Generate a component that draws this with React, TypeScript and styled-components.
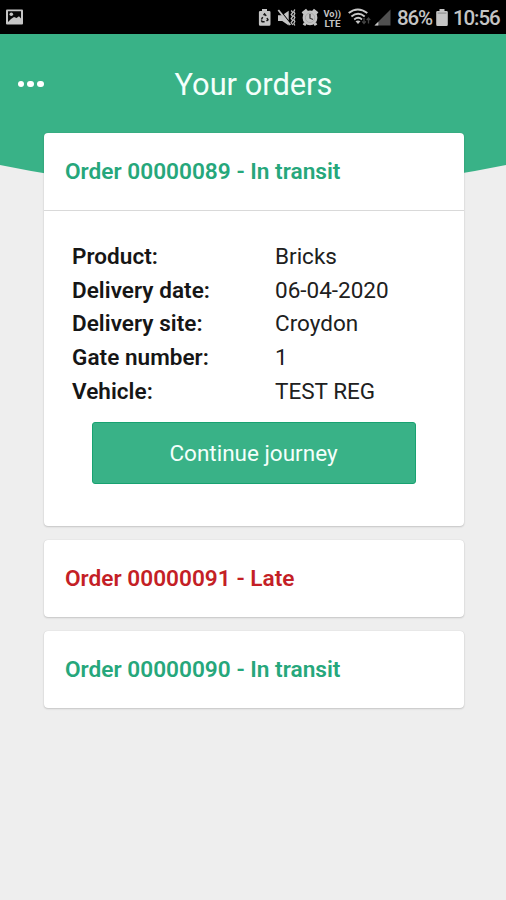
import React from "react";
import styled, { createGlobalStyle } from "styled-components";

const GlobalStyle = createGlobalStyle`
  * { box-sizing: border-box; }
  body {
    margin: 0;
    background: #eeeeee;
    font-family: Roboto, "Liberation Sans", sans-serif;
    font-size: 22.5px;
  }
`;

const Screen = styled.div`
  position: relative;
  height: 900px;
  overflow: hidden;
  background: #eeeeee;
`;

const StatusBar = styled.div`
  display: flex;
  justify-content: space-between;
  height: 34px;
  background: #000;
`;

const StatusArt = styled.svg`
  display: block;
  flex: none;
`;

const StatusRight = styled.div`
  display: flex;
`;

const StatusText = styled.span<{ $width: number }>`
  width: ${(p) => p.$width}px;
  color: #c4c4c4;
  font-size: 20.5px;
  font-weight: 500;
  letter-spacing: -1.1px;
  line-height: 37px;
  white-space: nowrap;
`;

const Curve = styled.svg`
  position: absolute;
  top: 34px;
  left: 0;
`;

const Header = styled.header`
  position: relative;
  display: grid;
  grid-template-columns: 60px 1fr 60px;
  align-items: center;
  height: 99px;
`;

const MenuButton = styled.button`
  display: flex;
  gap: 3.8px;
  padding: 1px 0 0 17.5px;
  border: 0;
  background: none;
`;

const Dot = styled.span`
  width: 6.2px;
  height: 6.2px;
  border-radius: 50%;
  background: #fff;
`;

const Title = styled.h1`
  margin: 2px 0 0 1px;
  color: #f4fffb;
  font-size: 30.8px;
  font-weight: 400;
  text-align: center;
`;

const Orders = styled.main`
  position: relative;
  display: flex;
  flex-direction: column;
  gap: 14px;
  padding: 0 42.5px 0 43.5px;
`;

const Card = styled.section`
  border-radius: 4px;
  background: #fff;
  box-shadow: 0 1px 2px rgba(0, 0, 0, 0.16), 0 0 1px rgba(0, 0, 0, 0.16);
`;

const CardTitle = styled.h2<{ $late?: boolean }>`
  height: 77px;
  margin: 0;
  padding: 0 21.5px;
  color: ${(p) => (p.$late ? "#c41f26" : "#26a77b")};
  font-size: 22.65px;
  font-weight: 600;
  line-height: 78px;
`;

const CardBody = styled.div`
  height: 316px;
  padding: 28.8px 28.5px 0;
  border-top: 1px solid #d9d9d9;
`;

const Details = styled.dl`
  display: grid;
  grid-template-columns: 203px 1fr;
  margin: 0;
  line-height: 33.75px;
`;

const Label = styled.dt`
  color: #161616;
  font-weight: 600;
  letter-spacing: 0.05px;
`;

const Value = styled.dd`
  margin: 0;
  color: #202020;
  font-weight: 400;
`;

const Action = styled.button`
  display: block;
  width: 324px;
  height: 62px;
  margin: 13.2px 0 0 19.5px;
  padding: 0;
  border: 1px solid #18a271;
  border-radius: 3px;
  background: #39b287;
  color: #f4fffb;
  font: inherit;
`;

const orders = [
  {
    id: "00000089",
    status: "In transit",
    details: [
      ["Product:", "Bricks"],
      ["Delivery date:", "06-04-2020"],
      ["Delivery site:", "Croydon"],
      ["Gate number:", "1"],
      ["Vehicle:", "TEST REG"],
    ],
  },
  { id: "00000091", status: "Late" },
  { id: "00000090", status: "In transit" },
];

function PhotoIcon() {
  return (
    <StatusArt width="40" height="34" viewBox="0 0 40 34">
      <rect x="6" y="9.5" width="17" height="15" rx="1" fill="#c6c6c6" />
      <path d="M8 11.3h13v7.2l-2-2.2-2.5 1.6-2.500-1-3 2.200-3 3z" fill="#090909" />
      <circle cx="11.3" cy="14.2" r="1.800" fill="#c6c6c6" />
    </StatusArt>
  );
}

function SystemIcons() {
  return (
    <StatusArt width="147" height="34" viewBox="250 0 147 34" fill="#c4c4c4">
      <path d="M262 9h5v2h2.2q1.3 0 1.3 1.3v12q0 1.500-1.300 1.500h-9q-1.300 0-1.300-1.500v-12q0-1.300 1.300-1.300h1.800z" />
      <path d="M261.400 19.500l1.300-2.300M263.600 15.200l1-1.300 1.600 2M267 18l1 1.800-1.500 1.200M264.600 21.700h-2.400l-.9-1.400" fill="none" stroke="#151515" strokeWidth="1.500" />
      <path d="M278 15.300h4.200l6.500-4.600v14.800l-6.500-4.400H278z" />
      <path d="M279 9.200l12 15" stroke="#000" strokeWidth="1.300" />
      <path d="M278.300 10l12 15" stroke="#c4c4c4" strokeWidth="1.800" />
      <path d="M291.200 10.500l1.600 2-1.600 2 1.600 2-1.600 2 1.600 2-1.600 2 1.600 2.500M294.800 9.500l-1 2 1 2-1 2 1 2-1 2 1 2-1 2 1 2" fill="none" stroke="#bdbdbd" strokeWidth="1.300" />
      <circle cx="310" cy="17.800" r="7.400" />
      <path d="M302.600 13.500l4.400-3.700M317.400 13.500l-4.400-3.700M305.300 23l-1.300 2.300M314.700 23l1.300 2.300" stroke="#c4c4c4" strokeWidth="3" />
      <circle cx="310" cy="17.800" r="4.700" fill="none" stroke="#a2a2a2" strokeWidth="0.800" />
      <path d="M310 14v4.200l3 1.300" fill="none" stroke="#333" strokeWidth="1.200" />
      <g fontWeight="700" fontFamily="Roboto, sans-serif">
        <text x="323.500" y="16.500" fontSize="9" textLength="17.500" lengthAdjust="spacingAndGlyphs">Vo))</text>
        <text x="324.500" y="26.600" fontSize="9.500" textLength="16" lengthAdjust="spacingAndGlyphs">LTE</text>
      </g>
      <g fill="none" stroke="#c8c8c8" strokeWidth="1.900">
        <path d="M348.700 13.100q9-7.300 18.600 0M351.400 16.400q6.700-5.400 13.300 0M354.200 19.400q4-3.100 7.800 0" />
      </g>
      <path d="M355.500 21.300q2.500-1.700 5 0L358 24z" />
      <path d="M364 18v5m-1.800-1.700L364 23.500l1.800-2.200M368.500 23.500v-5m-1.800 1.700l1.800-2.200 1.800 2.200" fill="none" stroke="#454545" strokeWidth="1.300" />
      <path d="M390.500 9.500v16h-16z" fill="#505050" />
      <path d="M378.300 21.700v3.800h-3.800z" />
    </StatusArt>
  );
}

function BatteryIcon() {
  return (
    <StatusArt width="18" height="34" viewBox="0 0 18 34">
      <path d="M4.500 9h5v2h2q1.300 0 1.300 1.300v12.200q0 1.500-1.300 1.500h-9q-1.300 0-1.300-1.500V12.300q0-1.300 1.300-1.300h2z" fill="#c4c4c4" />
      <path d="M2.600 12.400h8.800v1.500H2.600z" fill="#9c9c9c" />
    </StatusArt>
  );
}

export default function App() {
  return (
    <Screen>
      <GlobalStyle />
      <StatusBar>
        <PhotoIcon />
        <StatusRight>
          <SystemIcons />
          <StatusText $width={38}>86%</StatusText>
          <BatteryIcon />
          <StatusText $width={53}>10:56</StatusText>
        </StatusRight>
      </StatusBar>
      <Curve width="506" height="160" viewBox="0 34 506 160">
        <path d="M0 34H506V165Q253 217 0 165Z" fill="#39b287" />
      </Curve>
      <Header>
        <MenuButton aria-label="Menu">
          <Dot />
          <Dot />
          <Dot />
        </MenuButton>
        <Title>Your orders</Title>
      </Header>
      <Orders>
        {orders.map((order) => (
          <Card key={order.id}>
            <CardTitle $late={order.status === "Late"}>
              Order {order.id} - {order.status}
            </CardTitle>
            {order.details && (
              <CardBody>
                <Details>
                  {order.details.map(([label, value]) => (
                    <React.Fragment key={label}>
                      <Label>{label}</Label>
                      <Value>{value}</Value>
                    </React.Fragment>
                  ))}
                </Details>
                <Action>Continue journey</Action>
              </CardBody>
            )}
          </Card>
        ))}
      </Orders>
    </Screen>
  );
}
